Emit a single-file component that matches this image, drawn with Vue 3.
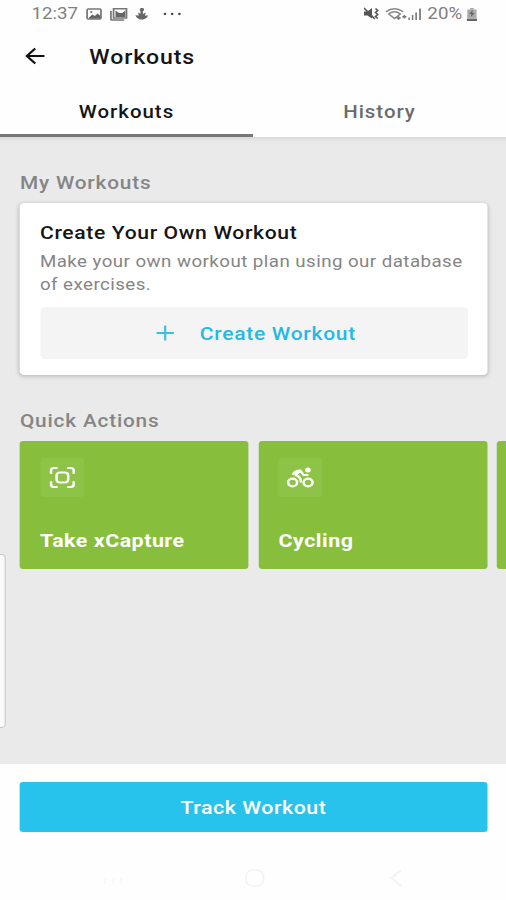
<script setup>
const actions = [
  { name: 'Take xCapture', icon: 'capture' },
  { name: 'Cycling', icon: 'cycling' },
  { name: '', icon: '' },
]
</script>

<template>
  <div class="screen">
    <header class="status">
      <span class="clock">12:37</span>
      <svg class="notices" width="90" height="16" viewBox="0 0 90 16">
        <g fill="none" stroke="#777" stroke-width="1.5">
          <rect x="1.400" y="3" width="12" height="10" rx="1" />
          <path d="M22 5v8.200q0 .8.8.8H33.500M24.300 2.800h11.200v9.200H24.300z" />
        </g>
        <path d="M3 11.500l3-3 2 1.500 2.500-2.500 2.500 2.500V12.500H3zM26 11V4.500l3 2.500h3l2.500-2.500V11z" fill="#666" />
        <circle cx="5" cy="6" r="1" fill="#777" />
        <path d="M49 2c2.300 0 2 2.500.7 3.300v2.600l2.500-1.400-.8 3.200 2.800-.4c-1 3.200-3.500 4.600-5.800 4.300-2.600-.2-4.400-2-5.200-4.400l3 .4-.7-3 2.100 1.200V5.300c-1-1-.8-3.300 1.400-3.300z" fill="#666" />
        <g fill="#444"><circle cx="68.800" cy="8" r="1.150" /><circle cx="75" cy="8" r="1.150" /><circle cx="81.300" cy="8" r="1.150" /></g>
      </svg>
      <span class="spacer"></span>
      <svg class="signals" width="50" height="16" viewBox="0 0 50 16">
        <path d="M0 5.500h3l4-3.500v10.500L3 9.500H0z" fill="#555" />
        <path d="M0 2l9.500 11M10 2.500l2 2-2 2 2 2-2 2 2 2" fill="none" stroke="#555" stroke-width="1.400" />
        <g fill="none" stroke="#888" stroke-width="1.400">
          <path d="M19 5.800Q26.500-.5 34 5.800M21.500 8Q26.500 3.500 31.500 8L26.500 12.500z" />
          <path d="M30 10.300v3.500M28.300 12h3.400M35 9v3.500M33.300 10.700h3.500" stroke="#777" />
        </g>
        <path d="M38.500 11.500h1.300V14H38.500zm3-2.500h1.300v5H41.500zm3-2.500h1.400V14H44.500zm3.300-4h1.500V14h-1.500z" fill="#777" />
      </svg>
      <span class="percent">20%</span>
      <svg class="battery" width="9" height="13" viewBox="0 0 9 13">
        <path d="M3 0h3v1.500h2.500V10h-8V1.500H3z" fill="#aaa" />
        <path d="M5 2L2 6h2l-.5 3L7 5H5zM0 10.500h9V13H0z" fill="#666" />
      </svg>
    </header>

    <div class="appbar">
      <svg class="back" width="18" height="18" viewBox="0 0 18 18" fill="none" stroke="#111" stroke-width="1.900">
        <path d="M17.500 9H2.500M9.500 1.500L2.200 9 9.500 16.500" />
      </svg>
      <h1>Workouts</h1>
    </div>

    <nav class="tabs">
      <a class="tab active"><span>Workouts</span></a>
      <a class="tab"><span>History</span></a>
    </nav>

    <main>
      <h2 class="mine">My Workouts</h2>
      <section class="card">
        <h3>Create Your Own Workout</h3>
        <p>Make your own workout plan using our database of exercises.</p>
        <button class="create">
          <svg width="16" height="16" viewBox="0 0 16 16" stroke="#3bbde5" stroke-width="1.900"><path d="M8 .5v15M.5 8h15" /></svg>
          <span>Create Workout</span>
        </button>
      </section>

      <h2 class="quick">Quick Actions</h2>
      <div class="actions">
        <article v-for="(action, i) in actions" :key="i" class="action">
          <div v-if="action.icon" class="badge">
            <svg v-if="action.icon === 'capture'" width="24" height="24" viewBox="0 0 24 24" fill="none" stroke="#fff" stroke-width="2.200" stroke-linecap="round">
              <path d="M2.200 7V4.500Q2.200 2 4.700 2H7M17 2h2.300Q21.800 2 21.800 4.500V7M21.800 16v2.500Q21.800 21 19.300 21H17M7 21H4.700Q2.200 21 2.200 18.500V16" />
              <rect x="7" y="6.500" width="10" height="10" rx="2.800" />
            </svg>
            <svg v-else width="24" height="24" viewBox="0 0 24 24" fill="none" stroke="#fff" stroke-width="2.200" stroke-linecap="round" stroke-linejoin="round">
              <circle cx="5.300" cy="16.500" r="3.900" />
              <circle cx="18.700" cy="16.500" r="3.900" />
              <path d="M5.800 7.800Q8.300 4.200 12 4.600L8 9.300Q12.600 11 12.400 15.600M12 4.800l2.800 4.200h3.200" />
              <circle cx="18.500" cy="4" r="2.500" fill="#fff" stroke="none" />
            </svg>
          </div>
          <strong>{{ action.name }}</strong>
        </article>
      </div>
      <div class="edge"></div>
    </main>

    <footer>
      <button class="track">Track Workout</button>
      <div class="system">
        <svg width="18" height="18" viewBox="0 0 18 18" stroke="#f7f7f7" stroke-width="1.800"><path d="M2 10v5M9 10v5M16 8v7" /></svg>
        <svg width="18" height="18" viewBox="0 0 18 18" fill="none" stroke="#f3f3f3" stroke-width="1.600"><rect x="1" y="1" width="15" height="16" rx="6" /></svg>
        <svg width="18" height="18" viewBox="0 0 18 18" fill="none" stroke="#f3f3f3" stroke-width="1.800"><path d="M13 1L5 9l8 8" /></svg>
      </div>
    </footer>
  </div>
</template>

<style>
body {
  margin: 0;
  overflow: hidden;
}
</style>

<style scoped>
.screen {
  position: relative;
  display: flex;
  flex-direction: column;
  width: 438px;
  height: 900px;
  overflow: hidden;
  background: #fefefe;
  font-family: Roboto, sans-serif;
  transform: scaleX(1.15525);
  transform-origin: 0 0;
}
h1, h2, h3, p {
  margin: 0;
  font-weight: 500;
}
button {
  border: 0;
  padding: 2px 0 0;
  font-family: inherit;
}
svg {
  display: block;
  flex: none;
}
.status {
  display: flex;
  align-items: center;
  height: 28px;
  box-sizing: border-box;
  padding: 0 25px 0 27.200px;
  font-size: 16.200px;
  line-height: 30px;
  color: #808080;
}
.notices {
  margin-left: 6.500px;
}
.spacer {
  flex: 1;
}
.percent {
  margin-left: 5px;
}
.battery {
  margin-left: 4px;
}
.appbar {
  display: flex;
  align-items: center;
  height: 58px;
  padding-left: 21px;
}
.back {
  margin-right: 38.300px;
  margin-top: -2px;
}
h1 {
  font-size: 20px;
  letter-spacing: 0.750px;
  color: #151515;
}
.tabs {
  display: flex;
  height: 51px;
}
.tab {
  flex: 1;
  display: flex;
  justify-content: center;
  box-sizing: border-box;
  line-height: 52px;
  font-size: 17.700px;
  font-weight: 500;
  letter-spacing: 0.850px;
  color: #6b6b6b;
}
.active {
  color: #151515;
  border-bottom: 3px solid #777;
}
main {
  position: relative;
  flex: 1;
  min-height: 0;
  box-sizing: border-box;
  padding-left: 17.300px;
  background: linear-gradient(#d8d8d8, #e8e8e8 4px, #eaeaea 9px);
  overflow: hidden;
}
h2 {
  font-size: 18px;
  line-height: 24px;
  letter-spacing: 0.700px;
  color: #858585;
}
.mine {
  padding: 34px 0 7.500px;
}
.card {
  width: 404.500px;
  height: 172.500px;
  box-sizing: border-box;
  padding: 18.500px 17.300px 0;
  border-radius: 4px;
  background: #fff;
  box-shadow: 0 1px 4px rgba(0, 0, 0, 0.250);
}
h3 {
  font-size: 18.300px;
  line-height: 24px;
  letter-spacing: 0.550px;
  color: #151515;
}
p {
  margin-top: 4.500px;
  font-size: 16.200px;
  font-weight: 400;
  line-height: 23.500px;
  letter-spacing: 0.390px;
  color: #858585;
}
.create {
  display: flex;
  align-items: center;
  justify-content: center;
  gap: 22px;
  width: 100%;
  height: 51.500px;
  margin-top: 10.500px;
  padding-left: 4px;
  border-radius: 4px;
  background: #f4f4f4;
  color: #25b9e5;
  font-size: 18.200px;
  font-weight: 500;
  letter-spacing: 0.620px;
}
.create svg {
  margin-top: -1px;
}
.quick {
  padding: 34px 0 8px;
}
.actions {
  display: flex;
  gap: 8.700px;
}
.action {
  display: flex;
  flex: none;
  flex-direction: column;
  justify-content: space-between;
  box-sizing: border-box;
  width: 197.800px;
  height: 127.500px;
  padding: 17px 17.300px 16px;
  border-radius: 3px;
  background: #87be3c;
  color: #fff;
}
.badge {
  display: grid;
  place-items: center;
  width: 38px;
  height: 39px;
  border-radius: 3px;
  background: #8dc346;
}
strong {
  font-size: 18.500px;
  line-height: 24px;
  font-weight: 700;
  letter-spacing: 0.450px;
}
.edge {
  position: absolute;
  left: -4px;
  top: 417px;
  width: 7px;
  height: 172px;
  border: 1px solid #c8c8c8;
  border-radius: 4px;
  background: #fafafa;
}
footer {
  height: 136px;
  box-sizing: border-box;
  padding: 17.500px 16.500px 0 17.300px;
}
.track {
  display: block;
  width: 100%;
  height: 50.500px;
  border-radius: 3px;
  background: #28c3ec;
  color: #fff;
  font-size: 18.500px;
  font-weight: 500;
  letter-spacing: 0.450px;
}
.system {
  display: flex;
  justify-content: space-between;
  padding: 37px 69px 0 72px;
}
</style>
